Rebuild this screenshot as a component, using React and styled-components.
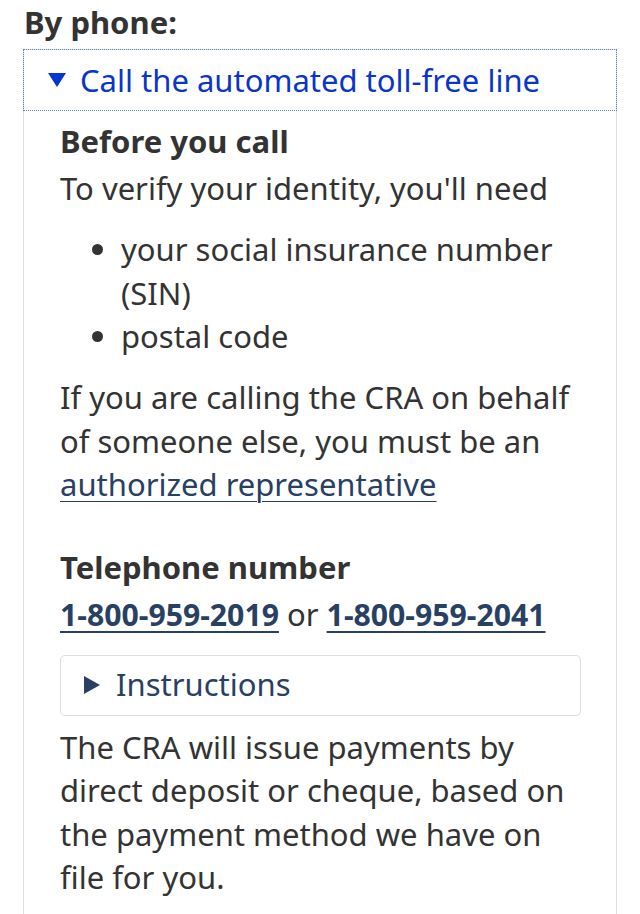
import React from 'react'
import styled, { createGlobalStyle } from 'styled-components'

const GlobalStyle = createGlobalStyle`
body {
  margin: 0;
  background: #fff;
  font-family: 'Noto Sans', 'Open Sans', sans-serif;
  color: #333;
}
`

const Page = styled.div`
padding: 4px 23px 0 23px;
`

const Heading = styled.h3`
margin: 0 0 9px 1px;
font-size: 31px;
line-height: 36px;
font-weight: 700;
color: #333;
`

const Details = styled.div`
border: 1px solid #ddd;
border-bottom: none;
`

const Summary = styled.div`
display: flex;
align-items: center;
gap: 14px;
height: 62px;
margin: -1px -1px 0 -1px;
padding-left: 25px;
box-sizing: border-box;
outline: 1px dotted #5f82b8;
outline-offset: -1px;
color: #0a35c8;
font-size: 31px;
`

const Down = styled.span`
width: 0;
height: 0;
border-left: 9px solid transparent;
border-right: 9px solid transparent;
border-top: 14px solid #0535d2;
`

const Body = styled.div`
padding: 9px 35px 14px 36px;
font-size: 31px;
line-height: 43.5px;
`

const SubHead = styled.h4`
margin: ${p => p.$top || 0}px 0 0 0;
font-size: 31px;
line-height: 43.5px;
font-weight: 700;
`

const Para = styled.p`
margin: ${p => p.$top || 0}px 0 0 0;
`

const List = styled.ul`
margin: 17.5px 0 0 0;
padding-left: 61px;
list-style: disc;
`

const Link = styled.a`
color: #284162;
text-decoration: underline;
text-decoration-thickness: ${p => (p.$bold ? '2px' : '1px')};
text-underline-offset: 5px;
font-weight: ${p => (p.$bold ? 700 : 400)};
font-size: ${p => (p.$bold ? '30.2px' : 'inherit')};
`

const Instructions = styled.div`
display: flex;
align-items: center;
gap: 16px;
margin: 18px 0 0 0;
height: 61px;
box-sizing: border-box;
padding-left: 23px;
border: 1px solid #ddd;
border-radius: 5px;
color: #284162;
`

const Right = styled.span`
width: 0;
height: 0;
border-top: 9px solid transparent;
border-bottom: 9px solid transparent;
border-left: 16px solid #284162;
`

const App = () => (
  <Page>
    <GlobalStyle />
    <Heading>By phone:</Heading>
    <Details>
      <Summary>
        <Down />
        <span>Call the automated toll-free line</span>
      </Summary>
      <Body>
        <SubHead>Before you call</SubHead>
        <Para $top={3.5}>To verify your identity, you'll need</Para>
        <List>
          <li>your social insurance number (SIN)</li>
          <li>postal code</li>
        </List>
        <Para $top={17.5}>
          If you are calling the CRA on behalf of someone else, you must be an{' '}
          <Link href="#">authorized representative</Link>
        </Para>
        <SubHead $top={39.5}>Telephone number</SubHead>
        <Para $top={3.5}>
          <Link $bold href="#">1-800-959-2019</Link> or <Link $bold href="#">1-800-959-2041</Link>
        </Para>
        <Instructions>
          <Right />
          <span>Instructions</span>
        </Instructions>
        <Para $top={10}>
          The CRA will issue payments by direct deposit or cheque, based on the payment method we have on file for you.
        </Para>
      </Body>
    </Details>
  </Page>
)

export default App
